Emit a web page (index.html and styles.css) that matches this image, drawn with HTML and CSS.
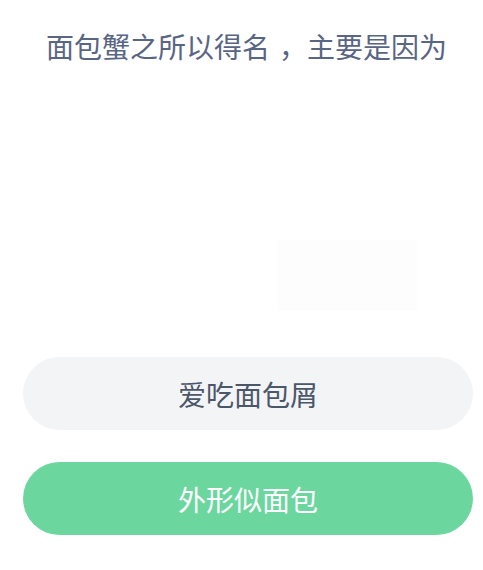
FILE: index.html
```html
<!DOCTYPE html>
<html lang="zh-CN">
<head>
<meta charset="utf-8">
<title>面包蟹</title>
<link rel="stylesheet" href="styles.css">
</head>
<body>
<main class="quiz">
  <h1 class="question">面包蟹之所以得名<span class="punct">，</span>主要是因为</h1>
  <div class="figure">
    <div class="figure-img"></div>
  </div>
  <div class="options">
    <button class="option">爱吃面包屑</button>
    <button class="option option-correct">外形似面包</button>
  </div>
</main>
</body>
</html>
```

FILE: styles.css
```css
html, body {
  margin: 0;
  padding: 0;
  background: #ffffff;
}

body {
  width: 483px;
  height: 570px;
  overflow: hidden;
  font-family: "Noto Sans CJK SC", "Noto Sans", sans-serif;
}

.quiz {
  box-sizing: border-box;
  width: 483px;
  padding: 0 10px 0 23px;
  display: flex;
  flex-direction: column;
}

.question {
  margin: 0;
  padding: 26px 3px 0 0;
  font-size: 28px;
  line-height: 40px;
  font-weight: 400;
  color: #586583;
  text-align: center;
  white-space: nowrap;
}

.punct {
  padding-left: 9px;
}

.figure {
  height: 291px;
  display: flex;
  justify-content: flex-end;
  align-items: flex-start;
  padding-right: 56px;
  box-sizing: border-box;
}

.figure-img {
  margin-top: 174px;
  width: 140px;
  height: 71px;
  background: #fdfdfd;
}

.options {
  display: flex;
  flex-direction: column;
  gap: 32px;
}

.option {
  height: 73px;
  width: 100%;
  border: none;
  border-radius: 37px;
  background: #f3f4f6;
  color: #4b5669;
  font-family: "Noto Sans CJK SC", "Noto Sans", sans-serif;
  font-size: 28px;
  font-weight: 400;
  padding: 0;
  cursor: pointer;
}

.option-correct {
  background: #6cd69f;
  color: #ffffff;
}
```
